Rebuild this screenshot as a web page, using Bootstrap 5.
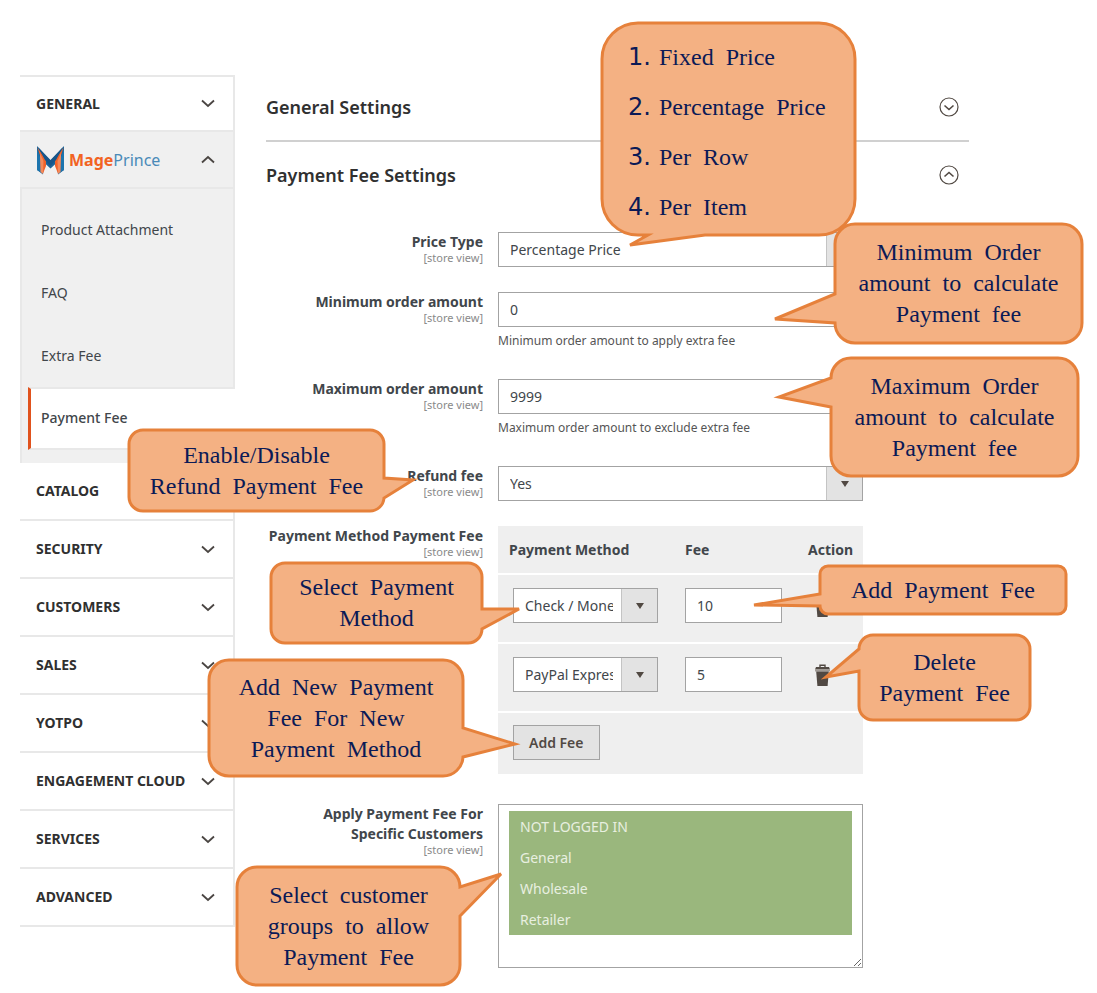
<!DOCTYPE html>
<html lang="en">
<head>
<meta charset="utf-8">
<meta name="viewport" content="width=device-width, initial-scale=1">
<title>Payment Fee Settings</title>
<link href="https://cdn.jsdelivr.net/npm/bootstrap@5.3.0/dist/css/bootstrap.min.css" rel="stylesheet">
<style>
body{font-family:"Noto Sans","Open Sans",sans-serif;font-size:14px;line-height:20px;color:#41464b;background:#fff}
.shell{padding:75px 128px 24px 20px;gap:31px}
.side-menu{width:215px}
.menu-head{height:58px;padding:0 18px 0 16px;border:0;border-right:2px solid #e8e8e8;border-bottom:2px solid #e8e8e8;background:#fff;font-weight:700;font-size:14px;color:#303030}
.menu-head.first{border-top:2px solid #e8e8e8}
.menu-head.first,.menu-head.open{height:57px}
.menu-head.open{background:#f0f0f0}
.flip{transform:rotate(180deg)}
.submenu{background:#f0f0f0;padding:9px 0 13px;border:solid #e8e8e8;border-width:0 2px}
.submenu a{height:63px;padding-left:19px;color:#41464b;text-decoration:none;font-size:14px}
.submenu a.current{margin:0 -2px 0 6px;padding:0 0 2px 10px;background:#fff;border:solid #e8e8e8;border-width:2px 0;border-left:3px solid #e0521d;font-weight:500}
.brand{font-size:16px;font-weight:700;color:#f26322}
.brand span{font-weight:400;color:#4a8ab8}
.section-title{font-size:18px;line-height:24px;font-weight:600;color:#303030;margin:0}
.section-head{height:67px;padding:0 10px 2px 0;border:0;background:none;text-align:left}
.section-head.ruled{border-bottom:2px solid #d0d0d0}
.settings{padding-top:23px}
.field-line{display:grid;grid-template-columns:217px minmax(0,365px);column-gap:15px;margin-bottom:25px}
.field-line.roomy{margin-bottom:30px}
.field-label{text-align:right;font-size:14px;font-weight:700;color:#41464b}
.scope{display:block;font-size:11px;line-height:12px;font-weight:400;color:#8a8a8a}
.hint{font-size:12px;line-height:28px;height:27px;color:#555}
.ctl{display:block;width:100%;height:35px;padding:0 11px;border:1px solid #a3a3a3;border-radius:0;background:#fff;color:#41464b;font-size:14px;line-height:20px;appearance:none}
.ctl-select{background:url("data:image/svg+xml,%3Csvg xmlns='http://www.w3.org/2000/svg' width='36' height='33'%3E%3Crect width='36' height='33' fill='%23e3e3e3'/%3E%3Crect width='1' height='33' fill='%23c4c4c4'/%3E%3Cpath d='M15 14h8l-4 6z' fill='%23514943'/%3E%3C/svg%3E") right center no-repeat #fff;padding-right:44px}
.fee-table{width:100%;background:#efefef;border-collapse:collapse;table-layout:fixed}
.fee-table th{height:48px;font-weight:700;font-size:14px;color:#41464b;padding:0}
.fee-table th:first-child{padding-left:11px}
.fee-table td{height:69px;padding:0 0 6px;border-top:2px solid #fff}
.fee-table td:first-child{padding-left:15px}
.fee-table tfoot td{height:62px;padding-bottom:2px}
.c-method{width:187px}.c-action{width:55px}
.w-method{width:145px}.w-fee{width:97px}
.trash{border:0;background:none;padding:0 7px;display:block}
.add-btn{height:35px;padding:0 15px;border:1px solid #a3a3a3;border-radius:0;background:#e3e3e3;font-size:14px;font-weight:600;color:#514943;line-height:20px}
.groups{display:block;width:100%;height:164px;padding:6px 10px;border:1px solid #a3a3a3;border-radius:0;background:#fff;font-size:14px;overflow:auto;resize:both;outline:0}
.groups option{height:31px;padding:6px 11px 0;min-height:31px}
.groups option:checked{background:linear-gradient(#9ab77d,#9ab77d);color:#e8efe0}
/* explanatory speech bubbles, each hung on the field it explains */
.bubble{position:absolute;z-index:3;display:flex;align-items:center;justify-content:center;text-align:center;white-space:pre;font-family:"Liberation Serif",serif;font-size:24px;line-height:31px;color:#0b1a56}
.bubble svg{position:absolute;left:0;top:0;width:100%;height:100%;overflow:visible;z-index:-1;fill:#f4b183;stroke:#e6813b;stroke-width:3;stroke-linejoin:miter}
.bubble ol{list-style:none;margin:0;padding:6px 0 0 26px;width:100%;text-align:left;line-height:50px}
.bubble ol b{font:24px/50px "DejaVu Sans",sans-serif;display:inline-block;width:31px}
.b-type{left:104px;top:-209px;width:253px;height:212px}
.b-min{left:337px;top:-68px;width:247px;height:119px}
.b-max{left:333px;top:-21px;width:247px;height:118px}
.b-refund{left:-369px;top:-36px;width:255px;height:81px}
.b-method{left:-227px;top:37px;width:211px;height:80px}
.b-fee{left:322px;top:40px;width:246px;height:48px}
.b-delete{left:361px;top:109px;width:171px;height:85px}
.b-add{left:-289px;top:134px;width:254px;height:116px}
.b-groups{left:-261px;top:63px;width:223px;height:118px}
</style>
</head>
<body>
<svg width="0" height="0" class="position-absolute" aria-hidden="true">
  <symbol id="chev" viewBox="0 0 14 9"><path d="M1 1.500l6 5.500 6-5.500" fill="none" stroke="#4a4542" stroke-width="1.800"/></symbol>
  <symbol id="bin" viewBox="0 0 15 22"><path d="M5 3V1.200h5V3" fill="none" stroke="#514943" stroke-width="1.400"/><path d="M1 3h13l1 2.500H0z" fill="#514943"/><path d="M0 5.500h15v2H0z" fill="#a09a95"/><path d="M1.200 7.500h12.600L12.600 22H2.400z" fill="#514943"/></symbol>
</svg>
<div class="shell d-flex align-items-start">
  <nav class="side-menu flex-shrink-0" aria-label="Configuration">
    <button class="menu-head first d-flex w-100 align-items-center justify-content-between">GENERAL<svg width="14" height="9"><use href="#chev"/></svg></button>
    <button class="menu-head open d-flex w-100 align-items-center justify-content-between">
      <span class="d-flex align-items-center gap-1"><svg width="29" height="30" viewBox="0 0 29 30"><path d="M1 1l13.500 15L28 1v24l-6 4.500-1-12-6.500 6-6.500-6-1 12L1 25z" fill="#1c6499"/><path d="M1.500 2.500L10 15v6L7 28.500 4.500 12zM27.500 2.500L19 15v6l3 7.500L24.500 12z" fill="#f0622a"/><path d="M4 8l3.500 8L7 29l-3-2.500zM25 8l-3.500 8 .5 13 3-2.500z" fill="#f4895a"/><path d="M2 2l12.500 13L27 2l-7 13-5.500 6L9 15z" fill="#17568a"/><path d="M1 4l3 8 .5 15L1 25zM28 4l-3 8-.5 15 3.500-2z" fill="#1d75ae"/></svg><span class="brand">Mage<span>Prince</span></span></span>
      <svg class="flip" width="14" height="9"><use href="#chev"/></svg></button>
    <div class="submenu">
      <a href="#" class="d-flex align-items-center">Product Attachment</a>
      <a href="#" class="d-flex align-items-center">FAQ</a>
      <a href="#" class="d-flex align-items-center">Extra Fee</a>
      <a href="#" class="d-flex align-items-center current">Payment Fee</a>
    </div>
    <button class="menu-head d-flex w-100 align-items-center justify-content-between">CATALOG<svg width="14" height="9"><use href="#chev"/></svg></button>
    <button class="menu-head d-flex w-100 align-items-center justify-content-between">SECURITY<svg width="14" height="9"><use href="#chev"/></svg></button>
    <button class="menu-head d-flex w-100 align-items-center justify-content-between">CUSTOMERS<svg width="14" height="9"><use href="#chev"/></svg></button>
    <button class="menu-head d-flex w-100 align-items-center justify-content-between">SALES<svg width="14" height="9"><use href="#chev"/></svg></button>
    <button class="menu-head d-flex w-100 align-items-center justify-content-between">YOTPO<svg width="14" height="9"><use href="#chev"/></svg></button>
    <button class="menu-head d-flex w-100 align-items-center justify-content-between">ENGAGEMENT CLOUD<svg width="14" height="9"><use href="#chev"/></svg></button>
    <button class="menu-head d-flex w-100 align-items-center justify-content-between">SERVICES<svg width="14" height="9"><use href="#chev"/></svg></button>
    <button class="menu-head d-flex w-100 align-items-center justify-content-between">ADVANCED<svg width="14" height="9"><use href="#chev"/></svg></button>
  </nav>

  <main class="flex-grow-1">
    <button class="section-head ruled d-flex w-100 align-items-center justify-content-between"><span class="section-title">General Settings</span>
      <svg width="20" height="20" viewBox="0 0 20 20" fill="none" stroke="#514943" stroke-width="1.200"><circle cx="10" cy="10" r="9"/><path d="M5.500 8.500l4.500 4 4.500-4" stroke-width="1.600"/></svg></button>
    <button class="section-head d-flex w-100 align-items-center justify-content-between"><span class="section-title">Payment Fee Settings</span>
      <svg width="20" height="20" viewBox="0 0 20 20" fill="none" stroke="#514943" stroke-width="1.200"><circle cx="10" cy="10" r="9"/><path d="M5.500 11.500l4.500-4 4.500 4" stroke-width="1.600"/></svg></button>

    <form class="settings">
      <div class="field-line">
        <label class="field-label" for="ptype">Price Type<span class="scope">[store view]</span></label>
        <div class="position-relative"><select id="ptype" class="ctl ctl-select"><option>Percentage Price</option></select>
          <div class="bubble b-type"><svg><path d="M36 0H217A36 36 0 0 1 253 36V176A36 36 0 0 1 217 212H103L28 222 46 212H36A36 36 0 0 1 0 176V36A36 36 0 0 1 36 0Z"/></svg><ol><li><b>1.</b>Fixed  Price</li><li><b>2.</b>Percentage  Price</li><li><b>3.</b>Per  Row</li><li><b>4.</b>Per  Item</li></ol></div>
        </div>
      </div>
      <div class="field-line">
        <label class="field-label" for="pmin">Minimum order amount<span class="scope">[store view]</span></label>
        <div class="position-relative"><input id="pmin" class="ctl" value="0"><div class="hint">Minimum order amount to apply extra fee</div>
          <div class="bubble b-min"><svg><path d="M20 0H227A20 20 0 0 1 247 20V99A20 20 0 0 1 227 119H20A20 20 0 0 1 0 99L-60 95 0 70V20A20 20 0 0 1 20 0Z"/></svg><span>Minimum  Order
amount  to  calculate
Payment  fee</span></div>
        </div>
      </div>
      <div class="field-line">
        <label class="field-label" for="pmax">Maximum order amount<span class="scope">[store view]</span></label>
        <div class="position-relative"><input id="pmax" class="ctl" value="9999"><div class="hint">Maximum order amount to exclude extra fee</div>
          <div class="bubble b-max"><svg><path d="M20 0H227A20 20 0 0 1 247 20V98A20 20 0 0 1 227 118H20A20 20 0 0 1 0 98V49L-52 39 0 20A20 20 0 0 1 20 0Z"/></svg><span>Maximum  Order
amount  to  calculate
Payment  fee</span></div>
        </div>
      </div>
      <div class="field-line">
        <label class="field-label" for="prefund">Refund fee<span class="scope">[store view]</span></label>
        <div class="position-relative"><select id="prefund" class="ctl ctl-select"><option>Yes</option></select>
          <div class="bubble b-refund"><svg><path d="M14 0H241A14 14 0 0 1 255 14V48L284 50 255 68A14 14 0 0 1 241 81H14A14 14 0 0 1 0 67V14A14 14 0 0 1 14 0Z"/></svg><span>Enable/Disable
Refund  Payment  Fee</span></div>
        </div>
      </div>
      <div class="field-line roomy">
        <div class="field-label text-nowrap">Payment Method Payment Fee<span class="scope">[store view]</span></div>
        <div class="position-relative">
          <table class="fee-table">
            <colgroup><col class="c-method"><col><col class="c-action"></colgroup>
            <thead><tr><th>Payment Method</th><th>Fee</th><th>Action</th></tr></thead>
            <tbody>
              <tr><td><select class="ctl ctl-select w-method" aria-label="Payment method 1"><option>Check / Money order</option></select></td><td><input class="ctl w-fee" value="10" aria-label="Fee 1"></td><td><button type="button" class="trash" aria-label="Delete"><svg class="d-block" width="15" height="22"><use href="#bin"/></svg></button></td></tr>
              <tr><td><select class="ctl ctl-select w-method" aria-label="Payment method 2"><option>PayPal Express Checkout</option></select></td><td><input class="ctl w-fee" value="5" aria-label="Fee 2"></td><td><button type="button" class="trash" aria-label="Delete"><svg class="d-block" width="15" height="22"><use href="#bin"/></svg></button></td></tr>
            </tbody>
            <tfoot><tr><td colspan="3"><button type="button" class="add-btn">Add Fee</button></td></tr></tfoot>
          </table>
          <div class="bubble b-method"><svg><path d="M14 0H197A14 14 0 0 1 211 14V46H248L211 66A14 14 0 0 1 197 80H14A14 14 0 0 1 0 66V14A14 14 0 0 1 14 0Z"/></svg><span>Select  Payment
Method</span></div>
          <div class="bubble b-fee"><svg><path d="M8 0H238A8 8 0 0 1 246 8V40A8 8 0 0 1 238 48H8A8 8 0 0 1 0 40L-66 39 0 28V8A8 8 0 0 1 8 0Z"/></svg><span>Add  Payment  Fee</span></div>
          <div class="bubble b-delete"><svg><path d="M14 0H157A14 14 0 0 1 171 14V71A14 14 0 0 1 157 85H14A14 14 0 0 1 0 71V36L-33 42 0 14A14 14 0 0 1 14 0Z"/></svg><span>Delete
Payment  Fee</span></div>
          <div class="bubble b-add"><svg><path d="M20 0H234A20 20 0 0 1 254 20V68L306 84 254 97A20 20 0 0 1 234 116H20A20 20 0 0 1 0 96V20A20 20 0 0 1 20 0Z"/></svg><span>Add  New  Payment
Fee  For  New
Payment  Method</span></div>
        </div>
      </div>
      <div class="field-line mb-0">
        <label class="field-label" for="pgroups">Apply Payment Fee For<br>Specific Customers<span class="scope">[store view]</span></label>
        <div class="position-relative">
          <select id="pgroups" class="groups" multiple size="4"><option selected>NOT LOGGED IN</option><option selected>General</option><option selected>Wholesale</option><option selected>Retailer</option></select>
          <div class="bubble b-groups"><svg><path d="M20 0H203A20 20 0 0 1 223 20L264 7 223 49V98A20 20 0 0 1 203 118H20A20 20 0 0 1 0 98V20A20 20 0 0 1 20 0Z"/></svg><span>Select  customer
groups  to  allow
Payment  Fee</span></div>
        </div>
      </div>
    </form>
  </main>
</div>
<script src="https://cdn.jsdelivr.net/npm/bootstrap@5.3.0/dist/js/bootstrap.bundle.min.js"></script>
</body>
</html>
